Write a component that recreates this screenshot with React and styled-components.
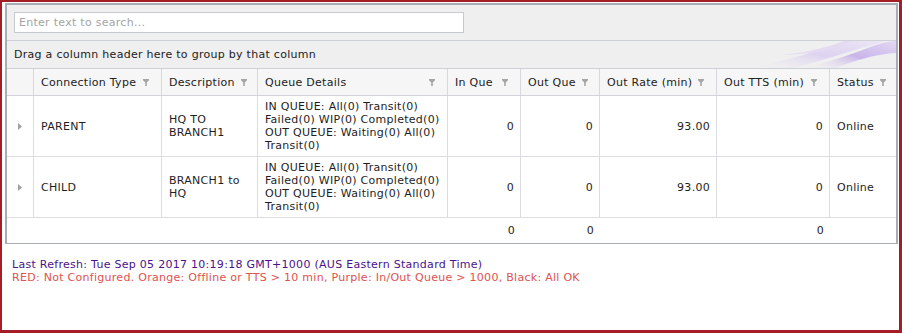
import React from "react";
import styled, { createGlobalStyle } from "styled-components";

const GlobalStyle = createGlobalStyle`
  html, body {
    margin: 0;
    padding: 0;
    background: #fff;
  }
  body {
    font-family: "DejaVu Sans", Verdana, sans-serif;
    font-size: 11px;
    letter-spacing: 0.28px;
    color: #1e1e24;
  }
`;

const COLS = "27px 128px 96px 190px 73px 79px 117px 113px 65px";

const columns = [
  { key: "expand", title: "" },
  { key: "type", title: "Connection Type" },
  { key: "desc", title: "Description" },
  { key: "queue", title: "Queue Details" },
  { key: "inQue", title: "In Que" },
  { key: "outQue", title: "Out Que" },
  { key: "rate", title: "Out Rate (min)" },
  { key: "tts", title: "Out TTS (min)" },
  { key: "status", title: "Status" },
];

const rows = [
  {
    type: "PARENT",
    desc: "HQ TO BRANCH1",
    queue:
      "IN QUEUE: All(0) Transit(0) Failed(0) WIP(0) Completed(0) OUT QUEUE: Waiting(0) All(0) Transit(0)",
    inQue: "0",
    outQue: "0",
    rate: "93.00",
    tts: "0",
    status: "Online",
  },
  {
    type: "CHILD",
    desc: "BRANCH1 to HQ",
    queue:
      "IN QUEUE: All(0) Transit(0) Failed(0) WIP(0) Completed(0) OUT QUEUE: Waiting(0) All(0) Transit(0)",
    inQue: "0",
    outQue: "0",
    rate: "93.00",
    tts: "0",
    status: "Online",
  },
];

const FilterIcon = () => (
  <svg width="6" height="7" viewBox="0 0 6 7">
    <path d="M0 0H6V1.2L3.8 3.4V7H2.2V3.4L0 1.2Z" fill="#a6a6a6" />
  </svg>
);

const ExpandArrow = () => (
  <svg width="4" height="7" viewBox="0 0 4 7">
    <path d="M0 0L4 3.5L0 7Z" fill="#a0a0a0" />
  </svg>
);

const Swoosh = () => (
  <SwooshSvg width="160" height="27" viewBox="0 0 160 27">
    <defs>
      <linearGradient id="sw1" x1="0" y1="1" x2="1" y2="0">
        <stop offset="0" stopColor="#efefef" stopOpacity="0" />
        <stop offset="0.5" stopColor="#ddd2f0" />
        <stop offset="1" stopColor="#ece6f6" />
      </linearGradient>
      <linearGradient id="sw2" x1="0" y1="1" x2="1" y2="0">
        <stop offset="0" stopColor="#efefef" stopOpacity="0" />
        <stop offset="0.5" stopColor="#c9b5ea" />
        <stop offset="1" stopColor="#e2d8f3" />
      </linearGradient>
    </defs>
    <path d="M15 27C50 20 88 8 115 0H150C120 8 85 20 58 27Z" fill="url(#sw1)" />
    <path d="M68 27C95 21 118 12 140 4C150 1 156 0 160 0V12C140 13 120 19 100 27Z" fill="url(#sw2)" />
    <path d="M45 14C70 12 92 6 108 0H116C98 8 80 13 45 14Z" fill="#e4dbf3" />
  </SwooshSvg>
);

const App = () => {
  return (
    <>
      <GlobalStyle />
      <Frame>
        <Grid>
          <Toolbar>
            <SearchBox placeholder="Enter text to search..." />
          </Toolbar>
          <GroupPanel>
            <span>Drag a column header here to group by that column</span>
            <Swoosh />
          </GroupPanel>
          <HeaderRow>
            {columns.map((c, i) => (
              <HeaderCell key={c.key} $last={i === columns.length - 1}>
                {c.title && (
                  <>
                    <span>{c.title}</span>
                    <FilterIcon />
                  </>
                )}
              </HeaderCell>
            ))}
          </HeaderRow>
          {rows.map((r) => (
            <DataRow key={r.type}>
              <Cell $center>
                <ExpandArrow />
              </Cell>
              <Cell>{r.type}</Cell>
              <Cell>{r.desc}</Cell>
              <Cell>{r.queue}</Cell>
              <Cell $right>{r.inQue}</Cell>
              <Cell $right>{r.outQue}</Cell>
              <Cell $right>{r.rate}</Cell>
              <Cell $right>{r.tts}</Cell>
              <Cell $last>{r.status}</Cell>
            </DataRow>
          ))}
          <FooterRow>
            <FooterCell />
            <FooterCell />
            <FooterCell />
            <FooterCell />
            <FooterCell $right>0</FooterCell>
            <FooterCell $right>0</FooterCell>
            <FooterCell />
            <FooterCell $right>0</FooterCell>
            <FooterCell />
          </FooterRow>
        </Grid>
        <Notes>
          <RefreshLine>
            Last Refresh: Tue Sep 05 2017 10:19:18 GMT+1000 (AUS Eastern Standard Time)
          </RefreshLine>
          <LegendLine>
            RED: Not Configured. Orange: Offline or TTS &gt; 10 min, Purple: In/Out Queue &gt; 1000, Black: All OK
          </LegendLine>
        </Notes>
      </Frame>
    </>
  );
};

export default App;

const Frame = styled.div`
  box-sizing: border-box;
  width: 902px;
  height: 333px;
  border-style: solid;
  border-color: #a51d25;
  border-width: 2px 3px 3px 2px;
  padding: 1px 1px 0 3px;
  background: #fff;
  overflow: hidden;
`;

const Grid = styled.div`
  border: 2px solid #a6adb5;
  border-bottom-width: 1px;
  background: #fff;
`;

const Toolbar = styled.div`
  display: flex;
  align-items: center;
  height: 35px;
  padding: 0 7px;
  background: #efefef;
  border-bottom: 1px solid #cdd0d6;
`;

const SearchBox = styled.input`
  box-sizing: border-box;
  width: 450px;
  height: 21px;
  margin: 0;
  padding: 0 4px;
  border: 1px solid #c6cad0;
  background: #fff;
  font-family: "DejaVu Sans", Verdana, sans-serif;
  font-size: 11px;
  letter-spacing: 0.28px;
  color: #333;
  outline: none;

  &::placeholder {
    color: #a4a4a4;
  }
`;

const GroupPanel = styled.div`
  display: flex;
  align-items: center;
  justify-content: space-between;
  height: 27px;
  padding-left: 7px;
  background: #efefef;
  border-bottom: 1px solid #cdd0d6;
  color: #222;
  overflow: hidden;
`;

const SwooshSvg = styled.svg`
  flex: none;
  display: block;
`;

const RowBase = styled.div`
  display: grid;
  grid-template-columns: ${COLS};
`;

const HeaderRow = styled(RowBase)`
  height: 26px;
  background: #f6f6f6;
  border-bottom: 1px solid #d3d4dc;
`;

const HeaderCell = styled.div`
  display: flex;
  align-items: center;
  justify-content: space-between;
  padding: 0 12px 0 7px;
  border-right: ${(p) => (p.$last ? "none" : "1px solid #d6d7df")};
  color: #222;
  white-space: nowrap;
  overflow: hidden;

  svg {
    flex: none;
    margin-left: 6px;
  }
`;

const DataRow = styled(RowBase)`
  height: 60px;
  border-bottom: 1px solid #dcdce4;
`;

const Cell = styled.div`
  display: flex;
  align-items: center;
  justify-content: ${(p) =>
    p.$right ? "flex-end" : p.$center ? "center" : "flex-start"};
  padding: 0 ${(p) => (p.$center ? "0" : "6px")} 0
    ${(p) => (p.$center ? "0" : "7px")};
  border-right: ${(p) => (p.$last ? "none" : "1px solid #dcdce4")};
  line-height: 13px;
  color: #1e1e24;
  overflow: hidden;
`;

const FooterRow = styled(RowBase)`
  height: 25px;
`;

const FooterCell = styled.div`
  display: flex;
  align-items: center;
  justify-content: ${(p) => (p.$right ? "flex-end" : "flex-start")};
  padding: 0 6px 0 7px;
  color: #1e1e24;
`;

const Notes = styled.div`
  padding: 14px 0 0 7px;
  line-height: 13px;
`;

const RefreshLine = styled.div`
  color: #4b1289;
`;

const LegendLine = styled.div`
  color: #e0514f;
`;
